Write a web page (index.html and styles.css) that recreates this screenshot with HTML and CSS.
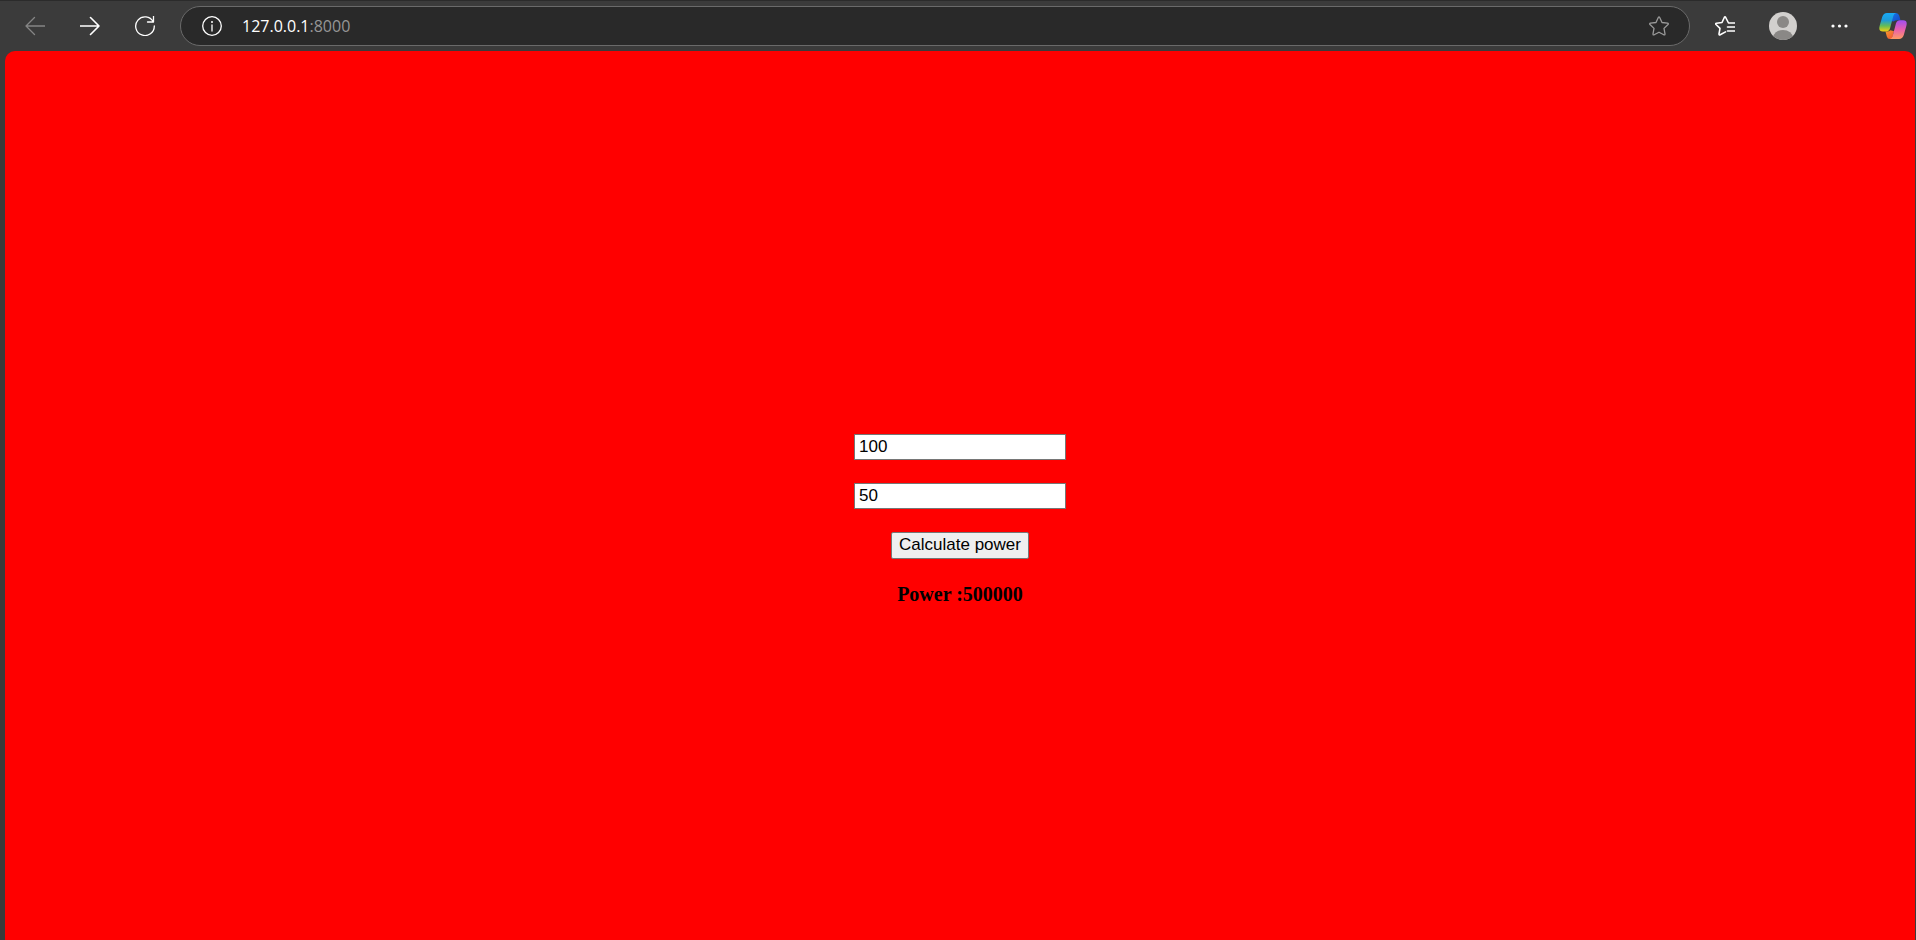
FILE: index.html
```html
<!DOCTYPE html>
<html lang="en">
<head>
<meta charset="utf-8">
<title>Calculate power</title>
<link rel="stylesheet" href="styles.css">
</head>
<body>
<header class="toolbar">
  <nav class="nav" aria-label="Navigation">
    <button class="icon-button muted" type="button" aria-label="Back" disabled>
      <svg viewBox="0 0 20 20"><path d="M9.500 1.500 1 10l8.500 8.500M1 10h19" /></svg>
    </button>
    <button class="icon-button" type="button" aria-label="Forward">
      <svg viewBox="0 0 20 20"><path class="bold" d="m10.500 1.500 8.500 8.500-8.500 8.500M19 10H0" /></svg>
    </button>
    <button class="icon-button" type="button" aria-label="Reload">
      <svg viewBox="0 0 20 20"><path d="M18.200 5.800A9.300 9.300 0 1 0 19.300 10M18.500 0v6h-6" /></svg>
    </button>
  </nav>
  <div class="address">
    <button class="icon-button" type="button" aria-label="Site information">
      <svg viewBox="0 0 20 20"><circle cx="10" cy="10" r="9.300" /><path d="M10 9v6" /><circle class="solid" cx="10" cy="6" r="1" /></svg>
    </button>
    <span class="url">127.0.0.1<span class="port">:8000</span></span>
    <button class="icon-button faint" type="button" aria-label="Add to favorites">
      <svg viewBox="0 0 20 20"><path d="M9.300 1.500q.7-1.300 1.400 0l2.300 5 5.500.7q1.400.3.500 1.300l-4 3.900 1 5.500q.1 1.500-1.200.900L10 16.200l-4.800 2.600q-1.300.6-1.200-.900l1-5.500-4-3.900q-.9-1 .5-1.300l5.500-.7Z" /></svg>
    </button>
  </div>
  <button class="icon-button" type="button" aria-label="Favorites">
    <svg viewBox="0 0 20 20"><path class="bold" d="M20 7h-6.500L10.700 1.500q-.7-1.300-1.400 0L7 6.500l-5.500.7q-1.400.3-.5 1.300l4 3.900-1 5.500q-.1 1.500 1.200.9l5.300-2.900M12.500 11H20M12.500 15H20" /></svg>
  </button>
  <button class="icon-button avatar" type="button" aria-label="Profile">
    <svg viewBox="0 0 28 28"><defs><clipPath id="disc"><circle cx="14" cy="14" r="14" /></clipPath></defs><g clip-path="url(#disc)" stroke="none"><rect width="28" height="28" fill="#d2d0ce" /><circle cx="14" cy="10" r="6" fill="#8a8886" /><ellipse cx="14" cy="26" rx="10" ry="8" fill="#8a8886" /></g></svg>
  </button>
  <button class="icon-button more" type="button" aria-label="Settings and more">
    <svg viewBox="0 0 20 20"><g class="solid"><circle cx="3" cy="10" r="1.600" /><circle cx="9.500" cy="10" r="1.600" /><circle cx="16" cy="10" r="1.600" /></g></svg>
  </button>
  <button class="icon-button copilot" type="button" aria-label="Copilot">
    <svg viewBox="0 0 28 28">
      <defs>
        <linearGradient id="cool" x1="0" y1="0" x2="0" y2="1"><stop offset="0" stop-color="#18a9f5" /><stop offset=".4" stop-color="#1e9bd8" /><stop offset=".7" stop-color="#65bd55" /><stop offset="1" stop-color="#f4d012" /></linearGradient>
        <linearGradient id="warm" x1="0" y1="0" x2="0" y2="1"><stop offset="0" stop-color="#a04ef2" /><stop offset=".5" stop-color="#e85fae" /><stop offset="1" stop-color="#ff9a62" /></linearGradient>
        <linearGradient id="blue" x1="0" y1="0" x2="1" y2="1"><stop offset="0" stop-color="#1477e8" /><stop offset="1" stop-color="#1746c4" /></linearGradient>
        <linearGradient id="red" x1="0" y1="0" x2="1" y2="1"><stop offset="0" stop-color="#f7a12b" /><stop offset="1" stop-color="#f04b38" /></linearGradient>
      </defs>
      <g stroke="none">
        <path fill="url(#blue)" d="M13 1h4q2.500 0 3.200 2.500l1.300 4.700h-3q-2.500 0-4 1.300L12 9Z" />
        <path fill="url(#red)" d="M6.500 19.500h1q2.500 0 4-1.300l3.500 1L13 27h-2q-2.500 0-3.200-2.500Z" />
        <path fill="url(#cool)" d="M8 1h9q-2 .5-2.700 3L11 16.500q-1 3-4 3H4Q-.8 19.500.6 14L3.200 5Q4.500 1 8 1Z" />
        <path fill="url(#warm)" d="M20 27h-9q2-.5 2.700-3L17 11.200q1-3 4-3h3q4.800 0 3.400 5.500L24.800 23q-1.300 4-4.800 4Z" />
      </g>
    </svg>
  </button>
</header>
<main class="page">
  <form class="calculator">
    <input class="field" type="text" aria-label="First value" value="100">
    <input class="field" type="text" aria-label="Second value" value="50">
    <button class="submit" type="button">Calculate power</button>
    <output class="result">Power :500000</output>
  </form>
</main>
</body>
</html>
```
FILE: styles.css
```css
* {
  box-sizing: border-box;
}

body {
  margin: 0;
  min-height: 100vh;
  display: flex;
  flex-direction: column;
  background: #3b3b3b;
}

.toolbar {
  display: flex;
  align-items: center;
  height: 51px;
  padding: 0 9px 0 25px;
  border-top: 1px solid #2b2b2b;
}

.nav {
  display: flex;
  gap: 35px;
  margin-right: 25px;
}

.icon-button {
  flex: none;
  width: 20px;
  height: 20px;
  padding: 0;
  border: 0;
  background: none;
  color: #fff;
}

.icon-button svg {
  display: block;
  width: 100%;
  height: 100%;
  fill: none;
  stroke: currentColor;
  stroke-width: 1.3;
  stroke-linecap: round;
  stroke-linejoin: round;
}

.icon-button .bold {
  stroke-width: 1.6;
}

.icon-button .solid {
  fill: currentColor;
  stroke: none;
}

.icon-button.muted {
  color: #858585;
}

.icon-button.faint {
  color: #9a9a9a;
}

.address {
  flex: 1;
  display: flex;
  align-items: center;
  height: 40px;
  margin-right: 25px;
  padding: 0 20px 0 21px;
  border: 1px solid #6a6a6a;
  border-radius: 20px;
  background: #292929;
}

.url {
  flex: 1;
  margin-left: 20px;
  font: 16px/24px "Open Sans", sans-serif;
  color: #fff;
}

.port {
  color: #969696;
}

.icon-button.avatar {
  width: 28px;
  height: 28px;
  margin-left: 34px;
}

.icon-button.more {
  margin-left: 33px;
}

.icon-button.copilot {
  width: 28px;
  height: 28px;
  margin-left: 29px;
}

.page {
  flex: 1;
  display: flex;
  flex-direction: column;
  align-items: center;
  justify-content: center;
  margin: 0 1px 0 5px;
  padding-top: 48px;
  border-radius: 10px 10px 0 0;
  background: #f00;
}

.calculator {
  display: flex;
  flex-direction: column;
  align-items: center;
  gap: 23px;
}

.field {
  width: 212px;
  height: 26px;
  padding: 0 4px;
  border: 1px solid #767676;
  background: #fff;
  font: 17px "Liberation Sans", Arial, sans-serif;
  color: #000;
}

.submit {
  height: 27px;
  padding: 0 7px 1px;
  border: 1px solid #767676;
  border-radius: 2px;
  background: #efefef;
  font: 17px "Liberation Sans", Arial, sans-serif;
  color: #000;
}

.result {
  font: bold 20px/24px "Liberation Serif", "Times New Roman", serif;
  color: #000;
}
```
